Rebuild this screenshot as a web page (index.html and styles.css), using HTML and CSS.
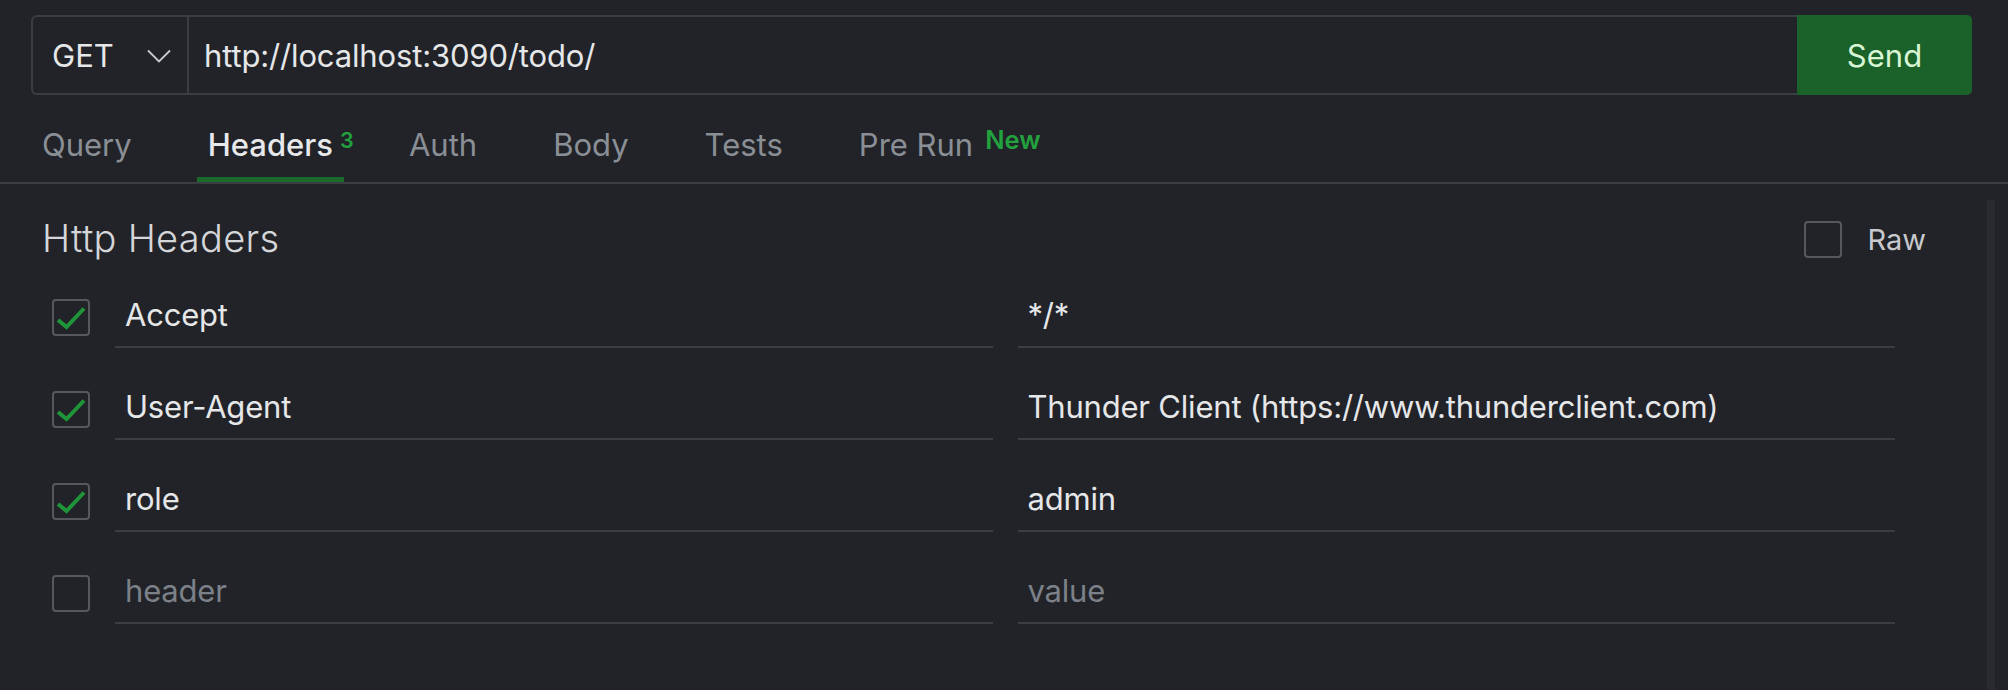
FILE: index.html
```html
<!DOCTYPE html>
<html>
<head>
<meta charset="utf-8">
<title>Thunder Client</title>
<link rel="stylesheet" href="styles.css">
</head>
<body>
<div class="app">
  <div class="request">
    <div class="urlbar">
      <div class="field">
        <div class="method">
          <span>GET</span>
          <svg class="chev" width="24" height="14" viewBox="0 0 24 14"><polyline points="1,1.5 12,12.5 23,1.5" fill="none" stroke="#c9cbce" stroke-width="1.8"/></svg>
        </div>
        <div class="url">http://localhost:3090/todo/</div>
      </div>
      <button class="send">Send</button>
    </div>
  </div>
  <nav class="tabs">
    <div class="tab">Query</div>
    <div class="tab active">Headers<span class="badge count">3</span></div>
    <div class="tab">Auth</div>
    <div class="tab">Body</div>
    <div class="tab">Tests</div>
    <div class="tab">Pre Run<span class="badge new">New</span></div>
  </nav>
  <div class="content">
    <div class="panel">
      <div class="panel-head">
        <h2 class="title">Http Headers</h2>
        <label class="raw"><span class="cb"></span><span>Raw</span></label>
      </div>
      <div class="rows">
        <div class="row">
          <span class="cb"><svg viewBox="0 0 38 37" width="38" height="37"><polyline points="6,21 14.5,28 32,9.5" fill="none" stroke="#1f9438" stroke-width="4"/></svg></span>
          <div class="input">Accept</div>
          <div class="input">*/*</div>
        </div>
        <div class="row">
          <span class="cb"><svg viewBox="0 0 38 37" width="38" height="37"><polyline points="6,21 14.5,28 32,9.5" fill="none" stroke="#1f9438" stroke-width="4"/></svg></span>
          <div class="input">User-Agent</div>
          <div class="input">Thunder Client (https://www.thunderclient.com)</div>
        </div>
        <div class="row">
          <span class="cb"><svg viewBox="0 0 38 37" width="38" height="37"><polyline points="6,21 14.5,28 32,9.5" fill="none" stroke="#1f9438" stroke-width="4"/></svg></span>
          <div class="input">role</div>
          <div class="input">admin</div>
        </div>
        <div class="row">
          <span class="cb"></span>
          <div class="input placeholder">header</div>
          <div class="input placeholder">value</div>
        </div>
      </div>
    </div>
    <div class="scrollbar"></div>
  </div>
</div>
</body>
</html>
```
FILE: styles.css
```css
html, body {
  margin: 0;
  padding: 0;
  background: #212328;
}
body {
  font-family: "Inter", "Noto Sans", sans-serif;
  color: #e4e5e8;
  height: 690px;
  overflow: hidden;
}
.request {
  padding: 15px 36px 0 31px;
}
.urlbar {
  display: flex;
  height: 80px;
}
.field {
  flex: 1;
  display: flex;
  border: 2px solid #3a3d42;
  border-right: none;
  border-radius: 6px 0 0 6px;
}
.method {
  box-sizing: border-box;
  width: 156px;
  border-right: 2px solid #3a3d42;
  display: flex;
  align-items: center;
  justify-content: space-between;
  padding: 0 16px 0 19px;
  font-size: 31px;
  color: #e6e7e9;
}
.chev {
  display: block;
  margin-top: 2px;
}
.url {
  display: flex;
  align-items: center;
  padding-left: 15px;
  font-size: 31px;
  color: #e6e7e9;
  letter-spacing: -0.15px;
}
.send {
  width: 175px;
  border: none;
  background: #1a6229;
  color: #d8f6d6;
  font-family: inherit;
  font-size: 31px;
  border-radius: 0 5px 5px 0;
  padding: 0;
}
.tabs {
  display: flex;
  gap: 54px;
  padding-left: 31px;
  height: 87px;
  border-bottom: 2px solid #3a3d42;
}
.tab {
  position: relative;
  display: flex;
  align-items: center;
  padding: 12px 11px 0;
  font-size: 31px;
  color: #8a8f96;
}
.tab.active {
  color: #e8e9eb;
  font-weight: 500;
}
.tab.active::after {
  content: "";
  position: absolute;
  left: 0;
  right: 0;
  bottom: 0;
  height: 5px;
  background: #1b6a2c;
}
.badge {
  position: absolute;
  font-weight: 600;
  color: #22a13e;
  line-height: 1;
}
.badge.count {
  left: calc(100% - 4px);
  top: 35px;
  font-size: 21.5px;
}
.badge.new {
  left: calc(100% + 1px);
  top: 32px;
  font-size: 25.5px;
}
.content {
  display: flex;
}
.panel {
  flex: 1;
  padding-top: 37px;
}
.scrollbar {
  width: 8px;
  margin: 16px 13px 0 0;
  height: 500px;
  background: #282b30;
}
.panel-head {
  display: flex;
  align-items: center;
  justify-content: space-between;
  height: 37px;
  padding: 0 61px 0 42px;
}
.title {
  margin: 0;
  font-size: 38px;
  font-weight: 300;
  color: #d5d6d9;
  letter-spacing: 0.3px;
  margin-top: -4px;
}
.raw {
  display: flex;
  align-items: center;
  gap: 25px;
  font-size: 29px;
  color: #c7c9cc;
}
.cb {
  position: relative;
  width: 38px;
  height: 37px;
  box-sizing: border-box;
  border: 2px solid #55585d;
  border-radius: 4px;
}
.cb svg {
  position: absolute;
  left: -2px;
  top: -2px;
  display: block;
}
.rows {
  margin-top: 28px;
  display: flex;
  flex-direction: column;
  gap: 30px;
}
.row {
  display: grid;
  grid-template-columns: 38px 1fr 1fr;
  column-gap: 25px;
  align-items: center;
  padding: 0 92px 0 52px;
}
.input {
  box-sizing: border-box;
  height: 62px;
  border-bottom: 2px solid #3a3d42;
  display: flex;
  align-items: center;
  padding: 0 0 4px 10px;
  font-size: 31px;
  color: #e6e7e9;
  letter-spacing: -0.2px;
}
.input.placeholder {
  color: #7c8189;
}
```
